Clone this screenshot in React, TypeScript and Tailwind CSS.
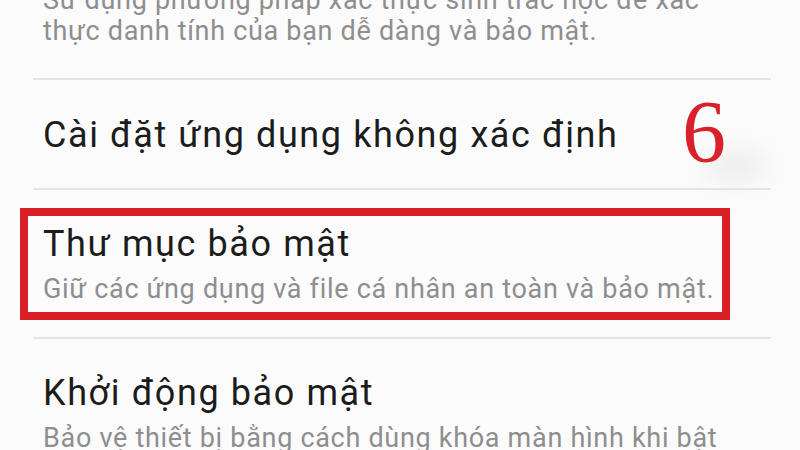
import React from 'react';

const Divider: React.FC = () => <div className="ml-[33px] h-[2px] w-[738px] bg-[#e4e4e4]" />;

const App: React.FC = () => {
  return (
    <div
      className="relative h-[450px] w-[800px] overflow-hidden bg-[#fbfbfb]"
      style={{ fontFamily: 'Roboto, "Noto Sans", sans-serif' }}
    >
      {/* mục trước, bị cắt ở trên */}
      <div className="-mt-[15px] pl-[43px] text-[27px] leading-[31px] tracking-[0.7px] text-[#8e8e8e]">
        <p>Sử dụng phương pháp xác thực sinh trắc học để xác</p>
        <p>thực danh tính của bạn dễ dàng và bảo mật.</p>
      </div>
      <div className="mt-[31px]">
        <Divider />
      </div>

      {/* Cài đặt ứng dụng không xác định */}
      <div className="relative pt-[35px] pb-[33px] pl-[43px]">
        <p className="text-[36px] leading-[40px] tracking-[1.6px] text-[#1c1c1c]">Cài đặt ứng dụng không xác định</p>
        <div className="absolute left-[705px] top-[72px] h-[28px] w-[60px] rounded-full bg-[#e2e2e2] opacity-60 blur-md" />
        <span
          className="absolute left-[682px] top-[8px] text-[88px] leading-none text-[#d8212b]"
          style={{ fontFamily: '"Liberation Serif", serif' }}
        >
          6
        </span>
      </div>
      <Divider />

      {/* Thư mục bảo mật */}
      <div className="mt-[18px] ml-[20px] h-[112px] w-[710px] border-[8px] border-[#db1f27] pt-[8px] pl-[15px]">
        <p className="text-[36px] leading-[40px] tracking-[1.6px] text-[#1c1c1c]">Thư mục bảo mật</p>
        <p className="mt-[10px] text-[27px] leading-[31px] tracking-[0.7px] text-[#8e8e8e]">
          Giữ các ứng dụng và file cá nhân an toàn và bảo mật.
        </p>
      </div>
      <div className="mt-[17px]">
        <Divider />
      </div>

      {/* Khởi động bảo mật */}
      <div className="mt-[34px] pl-[43px]">
        <p className="text-[36px] leading-[40px] tracking-[1.6px] text-[#1c1c1c]">Khởi động bảo mật</p>
        <p className="mt-[10px] text-[27px] leading-[31px] tracking-[0.7px] text-[#8e8e8e]">
          Bảo vệ thiết bị bằng cách dùng khóa màn hình khi bật
        </p>
      </div>
    </div>
  );
};

export default App;
